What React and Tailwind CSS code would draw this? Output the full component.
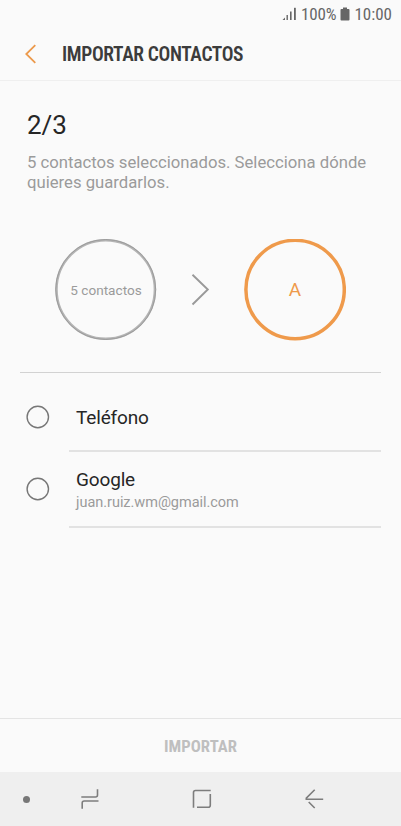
import React from "react";

const accounts = [
  { id: "phone", name: "Teléfono" },
  { id: "google", name: "Google", email: "juan.ruiz.wm@gmail.com" },
];

const StatusBar = () => (
  <div className="flex h-[28px] items-center justify-end pr-[9px] text-[#666] text-[17px] leading-[28px] font-stretch-condensed">
    <svg width="15" height="14" viewBox="0 0 15 14" fill="currentColor" className="mr-[4px]">
      <path d="M3 10.5V13H0.5z" />
      <rect x="4.5" y="8" width="1.4" height="5" />
      <rect x="8" y="4.5" width="1.6" height="8.5" />
      <rect x="12" y="0.8" width="1.8" height="12.2" />
    </svg>
    <span className="tracking-[-0.1px]">100%</span>
    <svg width="10" height="14" viewBox="0 0 10 14" fill="currentColor" className="mx-[4px]">
      <path d="M3 0.4h4V2h1.6q.9 0 .9 .9V12.600q0 .9-.9 .9H1.400q-.9 0-.9-.9V2.900q0-.9 .9-.9H3z" />
    </svg>
    <span>10:00</span>
  </div>
);

const Header = () => (
  <header className="flex h-[53px] items-center border-b border-[#efefef] pl-[25px]">
    <svg width="12" height="20" viewBox="0 0 12 20" fill="none" stroke="#ec9a4c" strokeWidth="1.8" className="shrink-0">
      <path d="M10.300 1.200L1.300 10l9 8.800" />
    </svg>
    <h1 className="ml-[25px] pt-[2px] text-[19.5px] font-semibold leading-6 tracking-[-0.36px] text-[#3c3c3c] font-stretch-condensed">
      IMPORTAR CONTACTOS
    </h1>
  </header>
);

const Ring = ({ label, className, children }) => (
  <div className={`grid h-[102px] w-[102px] place-items-center ${className}`}>
    <svg width="102" height="102" viewBox="0 0 102 102" fill="none" stroke="currentColor" className="col-start-1 row-start-1">
      {children}
    </svg>
    <span className="col-start-1 row-start-1">{label}</span>
  </div>
);

const AccountRow = ({ account }) => (
  <li className="flex pr-5">
    <span className="flex w-[69px] shrink-0 items-center pl-[26px]">
      <svg width="24" height="24" viewBox="0 0 24 24" fill="none" stroke="#777" strokeWidth="1.4" className="mb-[2px]">
        <circle cx="11.800" cy="12" r="10.700" />
      </svg>
    </span>
    <div
      className={`flex flex-1 flex-col justify-center border-b-2 border-[#e2e2e2] pl-[7px] pt-[2px] ${
        account.email ? "h-[76px]" : "h-[68px]"
      }`}
    >
      <span className="text-[19px] leading-[24px] tracking-[-0.16px] text-[#262626]">{account.name}</span>
      {account.email && (
        <span className="pt-px text-[14.500px] leading-[20px] tracking-[-0.03px] text-[#9b9b9b]">{account.email}</span>
      )}
    </div>
  </li>
);

const NavBar = () => (
  <nav className="flex h-[54px] items-center bg-[#efefef] text-[#7d7d7d]">
    <span className="ml-[23px] h-[7px] w-[7px] rounded-full bg-[#777]"></span>
    <svg width="20" height="22" viewBox="0 0 20 22" fill="none" stroke="currentColor" strokeWidth="1.6" className="ml-[50px]">
      <path d="M1.300 9h14.200q2 0 2-2V1.300M18.500 13H4.200q-2 0-2 2v5.700" />
    </svg>
    <svg width="20" height="20" viewBox="0 0 20 20" fill="none" stroke="currentColor" strokeWidth="1.600" className="ml-[92px]">
      <path d="M1.500 18.700V3.500q0-2 2-2h15.200M18.300 5v11.300q0 2-2 2H5" />
    </svg>
    <svg width="20" height="20" viewBox="0 0 20 20" fill="none" stroke="currentColor" strokeWidth="1.600" className="ml-[93px]">
      <path d="M9.700 .8L1.300 9.200V10.200H18.200M3.700 13l6 6" />
    </svg>
  </nav>
);

const App = () => {
  return (
    <div className="flex h-[826px] w-[401px] flex-col overflow-hidden bg-[#fafafa] font-[Roboto,sans-serif]">
      <StatusBar />
      <Header />

      <main className="flex-1">
        <section className="px-[27px] pt-[28px]">
          <h2 className="text-[26px] leading-[32px] text-[#262626]">2/3</h2>
          <p className="mt-[12px] whitespace-nowrap text-[16.7px] leading-[20px] text-[#9b9b9b]">
            5 contactos seleccionados. Selecciona dónde
            <br />
            quieres guardarlos.
          </p>
        </section>

        <section className="mx-5 mt-[46px] flex h-[134px] items-start border-b border-[#d2d2d2] pl-[35px]">
          <Ring label="5 contactos" className="text-[13.600px] text-[#9b9b9b]">
            <circle cx="50.700" cy="50.500" r="49.200" stroke="#b4b4b4" strokeWidth="2.500" />
            <circle cx="50.700" cy="50.500" r="50" stroke="#999" strokeWidth="0.900" />
          </Ring>
          <svg width="20" height="32" viewBox="0 0 20 32" fill="none" stroke="#999" strokeWidth="1.900" className="ml-[34px] mt-[35px]">
            <path d="M1.500 .8L16.800 15.500 1.500 30.500" />
          </svg>
          <Ring label="A" className="ml-[33px] text-[19px] text-[#ef9a4b]">
            <circle cx="51.100" cy="50.500" r="49.200" strokeWidth="3.500" />
          </Ring>
        </section>

        <ul className="pt-[11px]">
          {accounts.map((account) => (
            <AccountRow key={account.id} account={account} />
          ))}
        </ul>
      </main>

      <button className="h-[54px] border-t border-[#e4e4e4] pt-[2px] text-[16.700px] font-bold text-[#bfbfbf] font-stretch-condensed">
        IMPORTAR
      </button>
      <NavBar />
    </div>
  );
};

export default App;
